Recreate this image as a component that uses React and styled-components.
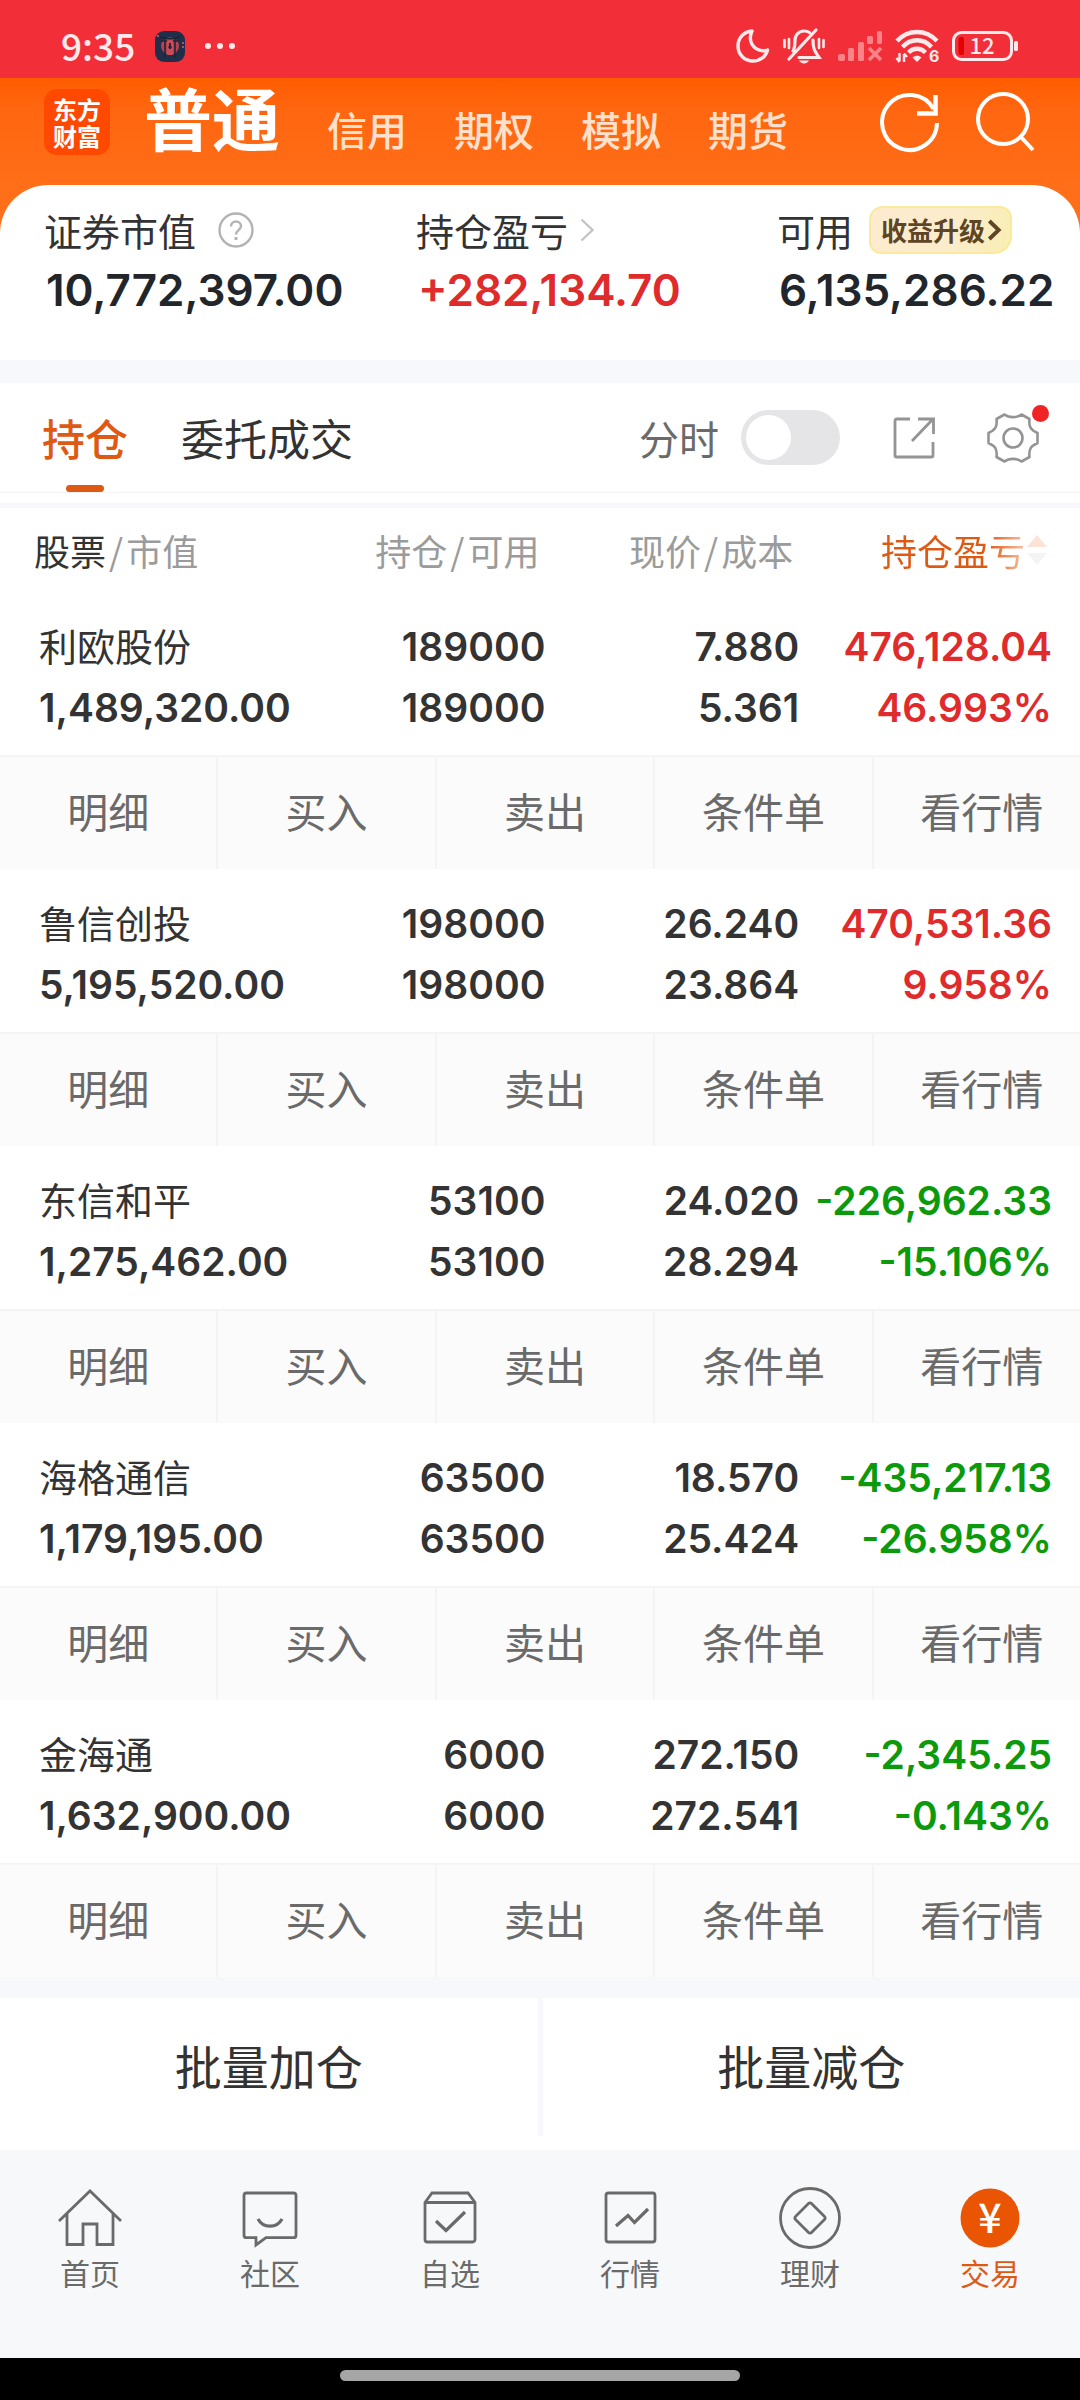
import React from 'react';
import styled, { createGlobalStyle } from 'styled-components';

const orange = '#de5a14';
const red = '#e02b2d';
const green = '#0c9a0c';
const ink = '#333333';
const grey = '#6a6a6a';
const lightGrey = '#9b9b9b';
const band = '#f6f8fb';
const cjk = '"Noto Sans CJK SC", "Noto Sans", sans-serif';
const digits = 'Inter, "Noto Sans CJK SC", sans-serif';

const GlobalStyle = createGlobalStyle`
  * {
    box-sizing: border-box;
  }
  body {
    margin: 0;
    background: #fff;
    color: ${ink};
    font-family: ${cjk};
  }
  button {
    margin: 0;
    padding: 0;
    border: 0;
    background: none;
    color: inherit;
    font: inherit;
    cursor: pointer;
  }
  a {
    color: inherit;
    text-decoration: none;
  }
  svg {
    display: block;
    flex: none;
    overflow: visible;
  }
`;

const Page = styled.div`
  width: 100%;
  overflow: hidden;
`;

const StatusBar = styled.div`
  display: flex;
  align-items: center;
  justify-content: space-between;
  height: 78px;
  padding: 14px 62px 0 61px;
  background: #f22f39;
  color: #ffe9ea;
`;
const StatusGroup = styled.div`
  display: flex;
  align-items: center;
  gap: ${(props) => props.$gap};
`;
const Clock = styled.span`
  padding-bottom: 2px;
  font-size: 37px;
  font-weight: 500;
  line-height: 40px;
`;

const Top = styled.div`
  background: linear-gradient(#ff5c00 0, #ff660f 30px, #ff6e18 107px);
`;
const Header = styled.header`
  display: flex;
  align-items: center;
  height: 107px;
  padding: 0 45px 20px 44px;
`;
const Logo = styled.a`
  display: grid;
  place-content: center;
  width: 66px;
  height: 66px;
  border-radius: 13px;
  background: #ff4800;
  color: #fff;
  font-size: 24px;
  font-weight: 700;
  line-height: 27px;
  span {
    width: 48px;
  }
`;
const Accounts = styled.nav`
  display: flex;
  align-items: baseline;
  gap: 47px;
  flex: 1;
  margin-left: 34px;
  padding-top: 3px;
`;
const Account = styled.a`
  font-size: ${(props) => (props.$current ? '68px' : '40px')};
  font-weight: ${(props) => (props.$current ? 700 : 500)};
  line-height: 80px;
  color: ${(props) => (props.$current ? '#fff' : '#ffe0cc')};
`;
const HeaderActions = styled.div`
  display: flex;
  align-items: center;
  gap: 35px;
`;

const Summary = styled.section`
  display: grid;
  grid-template-columns: 372fr 361fr 303fr;
  padding: 19px 0 40px 44px;
  border-radius: 48px 48px 0 0;
  background: #fff;
`;
const SummaryLabel = styled.div`
  display: flex;
  align-items: center;
  gap: ${(props) => props.$gap};
  height: 52px;
  margin-bottom: 4px;
  font-size: 38px;
  line-height: 52px;
`;
const SummaryValue = styled.div`
  padding-left: 2px;
  font-family: ${digits};
  font-size: 44px;
  font-weight: 600;
  line-height: 60px;
  color: ${(props) => (props.$up ? red : '#22262b')};
`;
const Upgrade = styled.button`
  display: flex;
  align-items: center;
  gap: 3px;
  height: 48px;
  padding: 0 10px;
  border: 2px solid #fbea9c;
  border-radius: 14px 12px 18px 12px;
  background: linear-gradient(100deg, #fdebcf, #fbeccb 60%, #f9eeb4);
  color: #5d4526;
  font-size: 26px;
  font-weight: 700;
`;

const Gap = styled.div`
  height: ${(props) => props.$size};
  background: ${band};
`;

const Toolbar = styled.div`
  display: flex;
  align-items: center;
  height: 110px;
  padding: 0 40px 0 42px;
  border-bottom: 1px solid #f4f4f4;
  margin-bottom: 10px;
`;
const Tabs = styled.div`
  display: flex;
  gap: 53px;
  flex: 1;
`;
const Tab = styled.button`
  display: flex;
  flex-direction: column;
  align-items: center;
  height: 109px;
  padding-top: 6px;
  font-size: 43px;
  font-weight: ${(props) => (props.$active ? 500 : 400)};
  line-height: 96px;
  color: ${(props) => (props.$active ? orange : ink)};
  &::after {
    content: '';
    width: 38px;
    height: 7px;
    border-radius: 4px;
    background: ${(props) => (props.$active ? orange : 'transparent')};
  }
`;
const SwitchLabel = styled.label`
  display: flex;
  align-items: center;
  gap: 22px;
  margin-right: 52px;
  font-size: 40px;
  color: ${grey};
`;
const Switch = styled.input`
  appearance: none;
  display: flex;
  align-items: center;
  width: 99px;
  height: 55px;
  margin: 0;
  padding: 0 5px;
  border-radius: 28px;
  background: #e5e5e7;
  &::before {
    content: '';
    width: 45px;
    height: 45px;
    border-radius: 50%;
    background: #fff;
  }
  &:checked {
    justify-content: flex-end;
    background: ${orange};
  }
`;
const SettingsButton = styled.button`
  position: relative;
  margin-left: 50px;
`;
const Dot = styled.span`
  position: absolute;
  top: -6px;
  right: -9px;
  width: 17px;
  height: 17px;
  border-radius: 50%;
  background: #f02424;
`;

const Table = styled.table`
  width: 100%;
  table-layout: fixed;
  border-collapse: collapse;
`;
const HeadCell = styled.th`
  width: ${(props) => props.$width};
  height: 84px;
  padding: ${(props) => props.$pad};
  text-align: ${(props) => props.$align || 'right'};
  vertical-align: top;
  font-size: 36px;
  font-weight: 400;
  line-height: 84px;
  white-space: nowrap;
  color: ${lightGrey};
  b {
    font-weight: 400;
    color: ${ink};
  }
`;
const Slash = styled.span`
  margin: 0 3px;
`;
const SortButton = styled.button`
  display: inline-flex;
  align-items: center;
  gap: 2px;
  vertical-align: top;
  span {
    background: linear-gradient(90deg, ${orange} 74%, #f8c3a4 100%);
    background-clip: text;
    color: transparent;
  }
`;
const Cell = styled.td`
  padding: ${(props) => props.$pad || '24px 0 17px'};
  text-align: ${(props) => props.$align || 'right'};
  font-family: ${digits};
  font-size: 39px;
  font-weight: 600;
  line-height: 61px;
  white-space: nowrap;
  color: ${(props) => props.$color || ink};
`;
const Line = styled.div`
  height: 61px;
`;
const Name = styled(Line)`
  font-family: ${cjk};
  font-size: 38px;
  font-weight: 400;
  line-height: 58px;
`;
const ActionCell = styled.td`
  padding: 0;
`;
const Actions = styled.div`
  display: grid;
  grid-template-columns: repeat(5, 1fr);
  margin-right: -12px;
  border-top: 2px solid #f4f4f4;
  background: #fbfbfb;
`;
const Action = styled.button`
  height: 112px;
  padding-bottom: 6px;
  border-right: 2px solid #f4f4f4;
  font-size: 41px;
  color: ${grey};
`;

const Batch = styled.div`
  display: flex;
  padding-bottom: 14px;
`;
const BatchButton = styled.button`
  flex: 1;
  height: 138px;
  padding-bottom: 6px;
  font-size: 47px;
  & + & {
    border-left: 5px solid ${band};
  }
`;

const BottomNav = styled.nav`
  display: grid;
  grid-template-columns: repeat(6, 1fr);
  padding: 36px 0 66px;
  background: #f7f8fa;
`;
const NavItem = styled.a`
  display: flex;
  flex-direction: column;
  align-items: center;
  gap: 2px;
  font-size: 30px;
  line-height: 40px;
  color: ${(props) => (props.$active ? orange : grey)};
`;
const HomeBar = styled.div`
  display: flex;
  justify-content: center;
  height: 42px;
  padding-top: 12px;
  background: #000;
  &::after {
    content: '';
    width: 37%;
    height: 11px;
    border-radius: 6px;
    background: #a6a6a6;
  }
`;

const StatusIcons = () => (
  <StatusGroup $gap="13px">
    <svg width="34" height="34" viewBox="0 0 34 34" fill="none" stroke="currentColor" strokeWidth="3.4" strokeLinejoin="round">
      <path d="M16 2C8 2.500 2 9 2 17c0 8.500 6.500 15 15 15 7 0 13-4.500 14.500-11-2 .8-4 1-6 .6C17 20 11.500 12 16 2z" />
    </svg>
    <svg width="42" height="36" viewBox="0 0 42 36" fill="none" stroke="currentColor" strokeWidth="3.2" strokeLinecap="round">
      <path d="M33 2 6 31M10 23c2-3 2-6 2-11 0-5 4-9 9-9 2 0 4 .5 5.500 1.500M30 12c0 8 1 10 6 17.500H16" />
      <path d="M16 32.500h10c-1 2-3 3-5 3s-4-1-5-3z" fill="currentColor" stroke="none" />
      <path d="M1.500 12v7M6 11v9M36 11v9M40.500 12v7" strokeWidth="2.600" />
    </svg>
    <svg width="44" height="30" viewBox="0 0 44 30" fill="#fa8288">
      <rect x="0" y="23" width="7" height="7" rx="2" />
      <rect x="10" y="17" width="6" height="13" rx="1.500" />
      <rect x="20" y="11" width="6" height="19" rx="1.500" />
      <rect x="29" y="5" width="6" height="8" rx="1.500" />
      <rect x="39" y="0" width="5" height="13" rx="1.500" />
      <path d="m31 17 12 12M43 17 31 29" stroke="#fa8288" strokeWidth="3.600" />
    </svg>
    <svg width="44" height="34" viewBox="0 0 44 34" fill="none" stroke="currentColor" strokeWidth="4.4">
      <path d="M2 12c11-12 29-12 40 0M7.500 18c8-9 21-9 29 0M13.500 23.500c5-5 12-5 17 0" />
      <path d="M17.500 28.500c2.500-2.300 6.500-2.300 9 0L22 33z" fill="currentColor" stroke="none" />
      <path d="M4.500 24v8M1.500 29l3 4M9 33v-8M12 28l-3-3.500" strokeWidth="2.400" />
      <text x="34" y="33" fill="currentColor" stroke="none" fontFamily="Inter, sans-serif" fontSize="16" fontWeight="700">6</text>
    </svg>
    <svg width="66" height="30" viewBox="0 0 66 30">
      <rect x="1.500" y="1.500" width="58" height="27" rx="8" fill="none" stroke="currentColor" strokeWidth="3" />
      <rect x="6.500" y="6" width="5.500" height="18" rx="2" fill="#e60000" />
      <rect x="62" y="10" width="4" height="10" rx="1.500" fill="currentColor" />
      <text x="30" y="23" textAnchor="middle" fill="currentColor" fontFamily="Noto Sans CJK SC, sans-serif" fontSize="22" fontWeight="500">12</text>
    </svg>
  </StatusGroup>
);

const AppBadge = () => (
  <svg width="30" height="31" viewBox="0 0 30 31">
    <rect width="30" height="31" rx="9" fill="#1f2f49" />
    <circle cx="15" cy="15" r="9" fill="#b8404f" />
    <path d="M5 6c6 2 14 2 20 0M7 10h16M10 8v18M20 8v18" stroke="#1c2337" strokeWidth="1.600" fill="none" />
    <rect x="12" y="9" width="6" height="15" rx="1" fill="#c94a58" />
    <path d="M15 12v6M13.500 16h3" stroke="#1c2337" strokeWidth="1.800" />
    <path d="M2 5h2M27 12h2M27 16h2" stroke="#e0606c" strokeWidth="1.600" />
  </svg>
);

const Chevron = ({ width, height, stroke, weight }) => (
  <svg width={width} height={height} viewBox="0 0 14 24" fill="none" stroke={stroke} strokeWidth={weight}>
    <path d="m1.500 1.500 11 10.500-11 10.500" />
  </svg>
);

const HelpIcon = () => (
  <svg width="36" height="36" viewBox="0 0 36 36" fill="none" stroke="#b3b3b3" strokeWidth="2.400">
    <circle cx="18" cy="18" r="16.500" />
    <path d="M13 14.500c0-3 2.200-5 5-5s5 2 5 4.600c0 4-5 4.200-5 8.400" />
    <path d="M18 25v3" strokeWidth="3" />
  </svg>
);

const navItems = [
  {
    label: '首页',
    icon: <path d="M1 35 32 5l31 30M9 28v30.500h16V38h14v20.500h16V28" />,
  },
  {
    label: '社区',
    icon: (
      <>
        <path d="M8.500 7h47a2.500 2.500 0 0 1 2.500 2.500v39.700a2.500 2.500 0 0 1-2.500 2.500H28L18 59v-7.300H8.500A2.500 2.500 0 0 1 6 49.200V9.500A2.500 2.500 0 0 1 8.500 7z" />
        <path d="M20 33c5 9.500 19 9.500 24 0" strokeWidth="3.200" />
      </>
    ),
  },
  {
    label: '自选',
    icon: (
      <>
        <path d="M7 16.500 14 7h36l7 9.500v37a2.500 2.500 0 0 1-2.500 2.500h-45A2.500 2.500 0 0 1 7 53.500zM7 16.500h50" />
        <path d="m18 35 10 9.500L47 26" strokeWidth="3.200" />
      </>
    ),
  },
  {
    label: '行情',
    icon: (
      <>
        <rect x="8" y="7" width="49" height="49" rx="2.500" />
        <path d="m18 40 12-10.500 6.500 7L50 23" strokeWidth="3.200" />
      </>
    ),
  },
  {
    label: '理财',
    icon: (
      <>
        <circle cx="32" cy="32" r="29.500" />
        <path d="m30.500 17.500-13 13a2 2 0 0 0 0 3l13 13a2 2 0 0 0 3 0l13-13a2 2 0 0 0 0-3l-13-13a2 2 0 0 0-3 0z" />
      </>
    ),
  },
  {
    label: '交易',
    active: true,
    icon: (
      <>
        <circle cx="32" cy="32" r="29.500" fill="#ea5504" stroke="none" />
        <text x="32" y="47" textAnchor="middle" fill="#fff" stroke="none" fontFamily="Noto Sans CJK SC, sans-serif" fontSize="41" fontWeight="500">
          ¥
        </text>
      </>
    ),
  },
];

const holdings = [
  { name: '利欧股份', value: '1,489,320.00', held: '189000', usable: '189000', price: '7.880', cost: '5.361', profit: '476,128.04', rate: '46.993%' },
  { name: '鲁信创投', value: '5,195,520.00', held: '198000', usable: '198000', price: '26.240', cost: '23.864', profit: '470,531.36', rate: '9.958%' },
  { name: '东信和平', value: '1,275,462.00', held: '53100', usable: '53100', price: '24.020', cost: '28.294', profit: '-226,962.33', rate: '-15.106%' },
  { name: '海格通信', value: '1,179,195.00', held: '63500', usable: '63500', price: '18.570', cost: '25.424', profit: '-435,217.13', rate: '-26.958%' },
  { name: '金海通', value: '1,632,900.00', held: '6000', usable: '6000', price: '272.150', cost: '272.541', profit: '-2,345.25', rate: '-0.143%' },
];
const actions = ['明细', '买入', '卖出', '条件单', '看行情'];

const Holding = ({ item }) => {
  const color = item.profit.startsWith('-') ? green : red;
  return (
    <tbody>
      <tr>
        <Cell $align="left" $pad="24px 0 17px 39px">
          <Name>{item.name}</Name>
          <Line>{item.value}</Line>
        </Cell>
        <Cell>
          <Line>{item.held}</Line>
          <Line>{item.usable}</Line>
        </Cell>
        <Cell>
          <Line>{item.price}</Line>
          <Line>{item.cost}</Line>
        </Cell>
        <Cell $color={color} $pad="24px 28px 17px 0">
          <Line>{item.profit}</Line>
          <Line>{item.rate}</Line>
        </Cell>
      </tr>
      <tr>
        <ActionCell colSpan={4}>
          <Actions>
            {actions.map((label) => (
              <Action key={label} type="button">
                {label}
              </Action>
            ))}
          </Actions>
        </ActionCell>
      </tr>
    </tbody>
  );
};

const App = () => {
  const [intraday, setIntraday] = React.useState(false);
  const [tab, setTab] = React.useState('持仓');
  return (
    <Page>
      <GlobalStyle />
      <StatusBar>
        <StatusGroup $gap="20px">
          <Clock>9:35</Clock>
          <AppBadge />
          <svg width="30" height="6" viewBox="0 0 30 6" fill="currentColor">
            <circle cx="3" cy="3" r="3" />
            <circle cx="15" cy="3" r="3" />
            <circle cx="27" cy="3" r="3" />
          </svg>
        </StatusGroup>
        <StatusIcons />
      </StatusBar>

      <Top>
        <Header>
          <Logo href="#home">
            <span>东方财富</span>
          </Logo>
          <Accounts>
            <Account href="#normal" $current>
              普通
            </Account>
            <Account href="#credit">信用</Account>
            <Account href="#options">期权</Account>
            <Account href="#demo">模拟</Account>
            <Account href="#futures">期货</Account>
          </Accounts>
          <HeaderActions>
            <button type="button" aria-label="刷新">
              <svg width="60" height="62" viewBox="0 0 60 62" fill="none" stroke="#fff" strokeWidth="4">
                <path d="M57 32A27.500 27.500 0 1 1 53.500 18" />
                <path d="M55.500 4v18.500H37" strokeWidth="4.500" />
              </svg>
            </button>
            <button type="button" aria-label="搜索">
              <svg width="60" height="62" viewBox="0 0 60 62" fill="none" stroke="#fff" strokeWidth="4">
                <circle cx="28" cy="28" r="25" />
                <path d="m45 45 13 14" />
              </svg>
            </button>
          </HeaderActions>
        </Header>

        <Summary>
          <div>
            <SummaryLabel $gap="22px">
              证券市值
              <HelpIcon />
            </SummaryLabel>
            <SummaryValue>10,772,397.00</SummaryValue>
          </div>
          <div>
            <SummaryLabel $gap="12px">
              持仓盈亏
              <Chevron width="14" height="24" stroke="#c4c4c4" weight="2.400" />
            </SummaryLabel>
            <SummaryValue $up>+282,134.70</SummaryValue>
          </div>
          <div>
            <SummaryLabel $gap="16px">
              可用
              <Upgrade type="button">
                收益升级
                <Chevron width="12" height="22" stroke="#5d4526" weight="4.500" />
              </Upgrade>
            </SummaryLabel>
            <SummaryValue>6,135,286.22</SummaryValue>
          </div>
        </Summary>
      </Top>

      <Gap $size="23px" />

      <Toolbar>
        <Tabs>
          {['持仓', '委托成交'].map((label) => (
            <Tab key={label} type="button" $active={tab === label} onClick={() => setTab(label)}>
              {label}
            </Tab>
          ))}
        </Tabs>
        <SwitchLabel>
          分时
          <Switch type="checkbox" role="switch" checked={intraday} onChange={(e) => setIntraday(e.target.checked)} />
        </SwitchLabel>
        <button type="button" aria-label="分享">
          <svg width="44" height="44" viewBox="0 0 44 44" fill="none" stroke="#949494" strokeWidth="2.800">
            <path d="M18 3H4.500A1.500 1.500 0 0 0 3 4.500v35A1.500 1.500 0 0 0 4.500 41h35a1.500 1.500 0 0 0 1.500-1.500V26M26 3h15.500v15M41 3 20 25" />
          </svg>
        </button>
        <SettingsButton type="button" aria-label="设置">
          <svg width="54" height="54" viewBox="-27 -27 54 54" fill="none" stroke="#949494" strokeWidth="2.600" strokeLinejoin="round">
            <path d="M24.500 5C18 8 15.500 11 16.500 19L8.500 23.500C4 20 -4 20 -8.500 23.500L-16.500 19C-15.500 11 -18 8 -24.500 5V-5C-18 -8 -15.500 -11 -16.500 -19L-8.500 -23.500C-4 -20 4 -20 8.500 -23.500L16.500 -19C15.500 -11 18 -8 24.500 -5Z" />
            <circle r="9.500" />
          </svg>
          <Dot />
        </SettingsButton>
      </Toolbar>
      <Gap $size="5px" />

      <Table>
        <thead>
          <tr>
            <HeadCell $width="30%" $align="left" $pad="0 0 0 34px">
              <b>股票</b>
              <Slash>/</Slash>市值
            </HeadCell>
            <HeadCell $width="20.500%" $pad="0 6px 0 0">
              持仓<Slash>/</Slash>可用
            </HeadCell>
            <HeadCell $width="23.500%" $pad="0 6px 0 0">
              现价<Slash>/</Slash>成本
            </HeadCell>
            <HeadCell $width="26%" $pad="0 33px 0 0">
              <SortButton type="button">
                <span>持仓盈亏</span>
                <svg width="20" height="30" viewBox="0 0 20 30">
                  <path d="M10 0l10 12H0z" fill="#fde3d6" />
                  <path d="M10 30l10-12H0z" fill="#f4f4f4" />
                </svg>
              </SortButton>
            </HeadCell>
          </tr>
        </thead>
        {holdings.map((item) => (
          <Holding key={item.name} item={item} />
        ))}
      </Table>

      <Gap $size="21px" />
      <Batch>
        <BatchButton type="button">批量加仓</BatchButton>
        <BatchButton type="button">批量减仓</BatchButton>
      </Batch>

      <BottomNav>
        {navItems.map((item) => (
          <NavItem key={item.label} href={`#${item.label}`} $active={item.active}>
            <svg width="64" height="64" viewBox="0 0 64 64" fill="none" stroke={grey} strokeWidth="2.800">
              {item.icon}
            </svg>
            {item.label}
          </NavItem>
        ))}
      </BottomNav>
      <HomeBar />
    </Page>
  );
};

export default App;
